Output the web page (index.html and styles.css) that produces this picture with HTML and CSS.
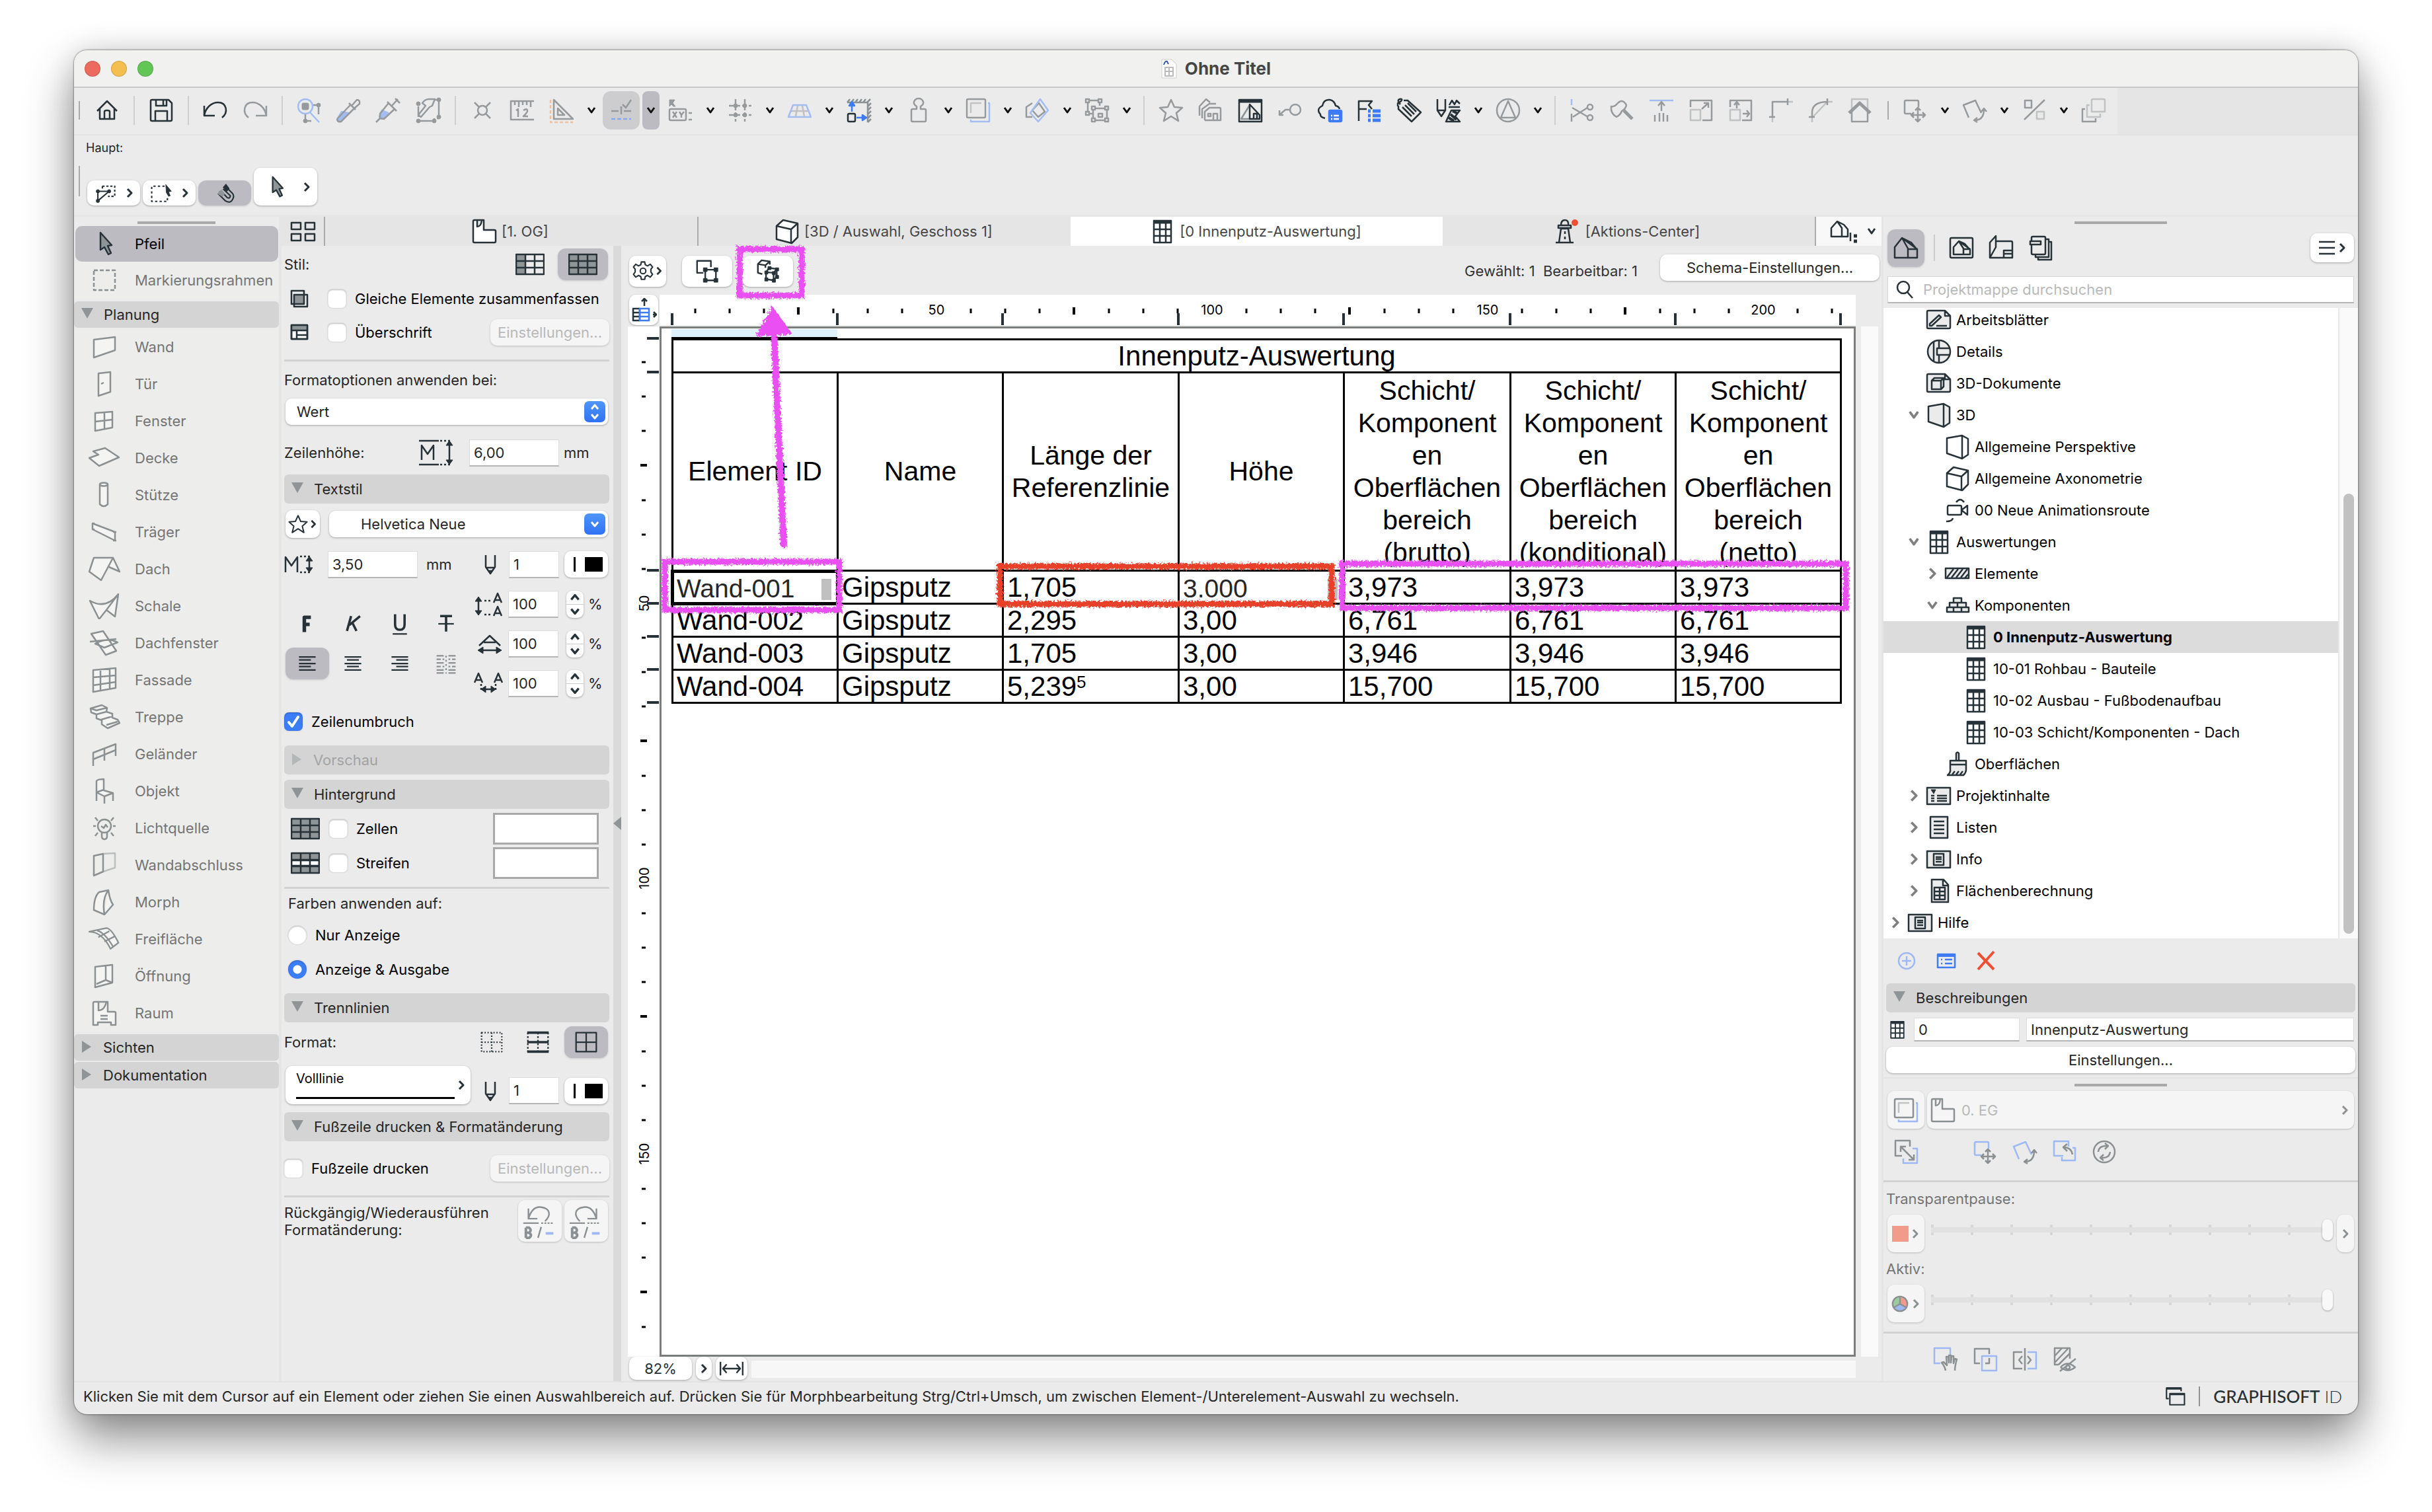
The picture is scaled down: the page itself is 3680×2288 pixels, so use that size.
FILE: index.html
```html
<!DOCTYPE html>
<html lang="de">
<head>
<meta charset="utf-8">
<title>Ohne Titel</title>
<link rel="stylesheet" href="styles.css">
</head>
<body>
<svg class="defs" aria-hidden="true">
  <symbol id="chev-d" viewBox="0 0 16 16"><path d="M3 4l5 7 5-7" stroke-width="3"/></symbol>
  <symbol id="chev-r" viewBox="0 0 16 16"><path d="M5 2l6 6-6 6" stroke-width="3"/></symbol>
  <symbol id="home" viewBox="0 0 40 40"><path d="M5 21L20 6l15 15M9 18v15h22V18M16 33V22q0-2 4-2t4 2v11"/></symbol>
  <symbol id="save" viewBox="0 0 40 40"><path d="M4 6q0-2 2-2h25l5 5v25q0 2-2 2H6q-2 0-2-2zM12 4v9h16V4M23 4v9M11 36V21h18v15"/></symbol>
  <symbol id="undo" viewBox="0 0 40 40"><path d="M3 13v15h16M3 28C5 16 14 8 24 8c13 0 16 15 6 23"/></symbol>
  <symbol id="redo" viewBox="0 0 40 40"><path d="M37 13v15H21M37 28C35 16 26 8 16 8 3 8 0 23 10 31"/></symbol>
  <symbol id="find" viewBox="0 0 40 40"><g class="ac"><circle cx="14" cy="14" r="11"/><path d="M21 23l14 15"/></g><rect class="fi" x="9" y="9" width="10" height="10" rx="2"/><path d="M26 12h8v14M14 26v10h9"/><g class="fi"><circle cx="34" cy="12" r="3"/><circle cx="14" cy="36" r="3"/></g></symbol>
  <symbol id="pipette" viewBox="0 0 40 40"><path class="acf" d="M9 22l10 2L6 37l-4-3z"/><path d="M22 12L3 32q-2 6 5 5l20-20M20 9l10 10M25 12l7-8q5 0 4 6l-8 7"/></symbol>
  <symbol id="syringe" viewBox="0 0 40 40"><path class="acf" d="M10 20l9 4-9 9-4-3z"/><path d="M20 9L7 25v7l6 1L29 18M18 7l14 14M25 13L34 3M30 2l7 7M7 32l-6 6"/></symbol>
  <symbol id="hammer" viewBox="0 0 40 40"><path d="M11 9q4-6 10-6h9l-4 10-4 2L9 30l-4-3 11-14zM28 4h8v28h-3M5 14v16M5 36h24v-4"/><g class="fi"><circle cx="36" cy="4" r="3"/><circle cx="36" cy="30" r="3"/><circle cx="5" cy="10" r="3"/><circle cx="5" cy="36" r="3"/><circle cx="29" cy="36" r="3"/></g></symbol>
  <symbol id="node" viewBox="0 0 40 40"><circle cx="20" cy="20" r="7"/><path d="M8 8l7 7M32 8l-7 7M8 32l7-7M32 32l-7-7"/></symbol>
  <symbol id="rule" viewBox="0 0 40 40"><path d="M38 6H3v28h35M9 6v6M15 6v9M21 6v6M27 6v6M33 6v9M11 20l3-2v12M22 20q6-4 6 1 0 2-6 8h7"/></symbol>
  <symbol id="tri" viewBox="0 0 40 40"><path d="M8 4v29h29zM14 17v10h10z"/><path class="or" d="M3 4v34h34" stroke-dasharray="5 3"/></symbol>
  <symbol id="snap" viewBox="0 0 40 40"><path d="M5 21h11M20 14v12M24 21h11M22 11l5 5 8-12"/><path class="ac" d="M5 33h30" stroke-dasharray="6 3"/></symbol>
  <symbol id="xy" viewBox="0 0 40 40"><rect x="3" y="18" width="25" height="17" rx="2"/><path d="M8 22l6 9M14 22l-6 9M18 22l3 5 4-5M21 27v4M32 24h5M32 34h5"/><path class="fi" d="M3 4h8l-3 5 4 5H9l-3-3-3 3z"/></symbol>
  <symbol id="grid4" viewBox="0 0 40 40"><path d="M13 3v34M27 3v34M3 13h34M3 27h34" stroke-dasharray="7 3"/><g class="fi"><circle cx="13" cy="13" r="3"/><circle cx="27" cy="13" r="3"/><circle cx="13" cy="27" r="3"/><circle cx="27" cy="27" r="3"/></g></symbol>
  <symbol id="persp" viewBox="0 0 40 40"><path class="lt" d="M17 13l-3 16M24 13l3 16M7 21h27"/><path class="ac" d="M10 12h20l7 18H3z"/></symbol>
  <symbol id="move" viewBox="0 0 40 40"><path d="M2 8L6 3M8 8l4-5M14 8l4-5M20 8l4-5M26 8l4-5M32 8l5-5M33 14l5-5M33 20l5-5M33 26l5-5M33 32l5-5M33 38l5-5M2 8h31v30" class="mut"/><rect x="3" y="25" width="11" height="12" rx="2"/><g class="ac"><path d="M9 22V12M16 31h10"/><path class="acf" d="M5 13l4-6 4 6zM25 27l6 4-6 4z"/></g></symbol>
  <symbol id="stamp" viewBox="0 0 40 40"><path d="M9 20q0-2 2-2h6v-4q-5-3-4-7 2-5 7-5t7 5q1 4-4 7v4h6q2 0 2 2v15q0 2-2 2H11q-2 0-2-2z"/></symbol>
  <symbol id="layers" viewBox="0 0 40 40"><rect x="3" y="3" width="28" height="28" rx="2"/><path class="lt" d="M9 24V9h16"/><path class="ac" d="M35 9h2v28H9v-3"/></symbol>
  <symbol id="cut3" viewBox="0 0 40 40"><path d="M12 30H3V15l9-6M12 20l10-11 9 13-10 8z"/><path class="ac" d="M24 3l12 17-15 17L9 24z"/></symbol>
  <symbol id="group" viewBox="0 0 40 40"><path d="M6 9v12M9 5h13M24 8v5M9 25h5M17 17h16M35 20v12M32 35H17M14 32V20M22 25h6v5h-6z"/><path d="M3 3h5v5H3zM22 3h5v5h-5zM3 22h5v5H3zM12 14h5v5h-5zM32 14h5v5h-5zM12 32h5v5h-5zM32 32h5v5h-5z"/></symbol>
  <symbol id="star" viewBox="0 0 40 40"><path d="M20 4l5 11 12 1-9 8 3 12-11-7-11 7 3-12-9-8 12-1z"/></symbol>
  <symbol id="houses" viewBox="0 0 40 40"><path d="M3 28V14L13 3l6 5M7 32V18L18 10h10M11 35V22l7-6h15q2 0 2 2v17H11M24 35V25h6v10M16 25h4v4h-4z"/></symbol>
  <symbol id="house-b" viewBox="0 0 40 40"><rect x="3" y="4" width="34" height="33"/><path d="M3 6h34" stroke-width="5"/><path class="mut" d="M19 33H6L19 12"/><path d="M19 11v22h15v-6zM25 33v-8h5v8"/></symbol>
  <symbol id="key" viewBox="0 0 40 40"><circle cx="28" cy="19" r="8"/><path d="M20 19h-7L5 26M4 20v7h6"/></symbol>
  <symbol id="cloud" viewBox="0 0 40 40"><path d="M13 32Q5 30 6 26-1 18 9 13q2-10 11-9 7 1 9 9 5 1 6 5"/><rect class="acf" x="19" y="20" width="19" height="17" rx="2"/><path class="wh" d="M22 28h2M26 28h8M22 33h2M26 33h8"/></symbol>
  <symbol id="flagl" viewBox="0 0 40 40"><path d="M4 36V6h20l-5 6 5 6M4 18h12"/><path class="ac" d="M18 21h4M25 21h12M18 28h4M25 28h12M18 35h4M25 35h12" stroke-width="5"/></symbol>
  <symbol id="tag" viewBox="0 0 40 40"><path d="M3 14V9l4-2q5-5-1-4-5 2 1 8M12 5h6l20 18-14 14L4 18v-5M10 15l14 14M14 12l14 14M18 9l13 13"/></symbol>
  <symbol id="hatchpen" viewBox="0 0 40 40"><path d="M3 3v17l6 9 6-9V3M3 20h12M21 12l4-7 4 6 3-6 5 5M20 15h17"/><path d="M16 37l8-17h13l-7 9 7 8z"/><path d="M26 21l8 4M23 26l9 8M20 31l8 5" stroke-width="4"/></symbol>
  <symbol id="tric" viewBox="0 0 40 40"><circle cx="20" cy="20" r="17"/><path d="M9 31L20 6l11 25z"/></symbol>
  <symbol id="scissors" viewBox="0 0 40 40"><path class="ac" d="M4 3v9"/><path d="M4 25v12M5 16l24 14M6 30l22-14"/><circle cx="32" cy="15" r="4"/><circle cx="32" cy="31" r="4"/></symbol>
  <symbol id="axe" viewBox="0 0 40 40"><path d="M4 14q5 1 9-4 8-9 14 2-1 6-7 9-2 6-8 9Q3 25 4 14z"/><path d="M23 20l13 13" stroke-width="5"/></symbol>
  <symbol id="arrup" viewBox="0 0 40 40"><path class="ac" d="M2 5h36"/><path d="M20 21V8M15 13l5-6 5 6M10 27v10M17 24v13M23 24v13M29 27v10"/></symbol>
  <symbol id="resize" viewBox="0 0 40 40"><path class="lt" d="M4 19h15v16H4z"/><path d="M4 15V5h32v30H22M21 18L31 9M24 9h7v7"/></symbol>
  <symbol id="stretch" viewBox="0 0 40 40"><path class="lt" d="M4 19h15v16H4z"/><path d="M4 15V5h32v30H22M14 17V8M10 12l4-5 4 5M23 25h10M29 20l4 5-4 5"/></symbol>
  <symbol id="corner" viewBox="0 0 40 40"><path d="M8 30V7h24M3 30h9M31 2v10"/><path class="lt" d="M32 7h7M8 30v8"/></symbol>
  <symbol id="curve" viewBox="0 0 40 40"><path d="M8 30V22Q9 7 32 7M3 30h9M31 2v10"/><path class="lt" d="M32 7h7M8 30v8M10 29L30 8"/></symbol>
  <symbol id="roof" viewBox="0 0 40 40"><path class="lt" d="M8 18V3h24v15"/><path d="M8 20v17h24V20"/><path d="M4 24L20 9l16 15" stroke-width="5"/></symbol>
  <symbol id="mv" viewBox="0 0 40 40"><path class="ac" d="M14 25H6q-2 0-2-2V7q0-2 2-2h17q2 0 2 2v8"/><path d="M24 16v21M14 27h21M20 20l4-4 4 4M20 33l4 4 4-4M18 23l-4 4 4 4M31 23l4 4-4 4"/></symbol>
  <symbol id="rot" viewBox="0 0 40 40"><path class="ac" d="M11 31L3 12 21 5l9 19"/><path d="M20 35q14 0 14-17M30 22l4-5 4 5M24 31l-5 4 5 3"/></symbol>
  <symbol id="pct" viewBox="0 0 40 40"><path d="M5 34L36 4M6 5h10v11H6z"/><path class="lt" d="M24 22h11v11H24z"/></symbol>
  <symbol id="copies" viewBox="0 0 40 40"><path d="M7 18H3v19h20v-5"/><path class="lt" d="M14 12h-4v18h20v-5M17 5q0-2 2-2h16q2 0 2 2v17H17z"/></symbol>
  <symbol id="arrow" viewBox="0 0 40 40"><path class="grf" d="M14 3v26l6-4 6 11 4-2-5-11 6-1z"/></symbol>
  <symbol id="marquee" viewBox="0 0 40 40"><path d="M4 5h32v30H4z" stroke-dasharray="6 3"/></symbol>
  <symbol id="m1" viewBox="0 0 40 40"><path d="M14 8h22v18H24M14 8v5" stroke-dasharray="4 3"/><path d="M6 34V17h20L6 34M26 20v-6" /><g class="fi"><circle cx="6" cy="17" r="3"/><circle cx="26" cy="17" r="3"/><circle cx="6" cy="34" r="3"/></g></symbol>
  <symbol id="m2" viewBox="0 0 40 40"><path d="M26 8H3v27h28v-8" stroke-dasharray="4 4"/><path class="fi" d="M28 5l10 12-5 1 3 7-3 1-4-7z"/></symbol>
  <symbol id="magnet" viewBox="0 0 40 40"><path d="M7 21l13 13q10 6 14-5 2-5-2-9L21 9M13 17l10 11q5 3 6-3L16 13"/><path class="fi" d="M16 10l5-6 6 8-5 6z"/><path class="mutf" d="M8 17l6-3 5 8-4 5-8-5z"/></symbol>
  <symbol id="wand" viewBox="0 0 40 40"><path class="pf" d="M4 9l32-4v20L4 36z"/></symbol>
  <symbol id="tuer" viewBox="0 0 40 40"><path class="pf" d="M11 4l18-2v30l-18 6zM15 20l4-2"/></symbol>
  <symbol id="fenster" viewBox="0 0 40 40"><path class="pf" d="M6 8l26-2v24L6 35zM20 7v25M6 21l26-3"/></symbol>
  <symbol id="decke" viewBox="0 0 48 40"><path class="pf" d="M1 20l14-5-8-5 18-5 21 14-30 13z"/></symbol>
  <symbol id="stuetze" viewBox="0 0 40 40"><path class="pf" d="M13 4v30q6 6 12 0V4"/><ellipse class="pf" cx="19" cy="4" rx="6" ry="2.500"/></symbol>
  <symbol id="traeger" viewBox="0 0 40 40"><path class="pf" d="M2 7v9l34 17V20zM2 7h3M2 16h3M33 20h5M33 33h5"/></symbol>
  <symbol id="dach" viewBox="0 0 48 40"><path class="pf" d="M8 3h29l-18 34L1 24zM37 3l10 21-16-7"/></symbol>
  <symbol id="schale" viewBox="0 0 48 40"><path class="pf" d="M2 12q24 14 43-10l-5 34-13-10-11 14z M45 2L27 26"/></symbol>
  <symbol id="dachfenster" viewBox="0 0 48 40"><path class="pf" d="M4 6l18-4 20 30-16 6zM2 18l40-4M10 21q18-10 34-2l-20 8zM4 6l14 20"/></symbol>
  <symbol id="fassade" viewBox="0 0 40 40"><path class="pf" d="M3 5l34-3v30L3 38zM14 4v32M28 3v30M3 16l34-3M3 28l34-5"/></symbol>
  <symbol id="treppe" viewBox="0 0 48 40"><path class="pf" d="M3 7l17-5 8 4-1 6 9 3v6l8 3 3 5-18 8-9-6v-6l-8-3v-6l-8-3zM3 7l9 3 16-4M12 16l15-4M19 24l17-5M27 32l17-5"/></symbol>
  <symbol id="gelaender" viewBox="0 0 40 40"><path d="M3 38V18L37 5v18M3 28l34-14M20 12v18"/></symbol>
  <symbol id="objekt" viewBox="0 0 40 40"><path class="pf" d="M8 35V5q1-3 11-3v17l14 4-13 5-12-6M20 28v11M33 23v12M8 22l11-4"/></symbol>
  <symbol id="licht" viewBox="0 0 40 40"><circle cx="20" cy="17" r="10"/><path d="M16 26v6q0 5 4 5t4-5v-6M15 17l4 3 3-5 3 4M3 17h4M33 17h4M6 4l4 5M34 4l-4 5M6 32l4-5M34 32l-4-5"/></symbol>
  <symbol id="wandab" viewBox="0 0 40 40"><path d="M4 6l14-3v27L4 36z"/><path class="lt" d="M18 3l18-1v22l-18 6"/></symbol>
  <symbol id="morph" viewBox="0 0 40 40"><path class="pf" d="M4 32q0-20 8-27l14-3q2 15 7 22L20 39zM26 2Q16 15 20 39"/></symbol>
  <symbol id="frei" viewBox="0 0 52 40"><path class="pf" d="M1 8l28-6q8 0 20 24l-13 10Q22 8 1 8zM14 6q12 3 26 26M16 17l18-10M26 24l18-9"/></symbol>
  <symbol id="oeffnung" viewBox="0 0 40 40"><path class="pf" d="M6 6l26-3v27L6 37zM22 5v21L8 32M22 26l10 4"/></symbol>
  <symbol id="raum" viewBox="0 0 40 40"><path class="pf" d="M3 5q0-2 2-2h20v15h10q2 0 2 2v18h-7v-4H10v4H3zM11 3v13q9 0 12-13M14 24h11M14 29h11"/></symbol>
  <symbol id="zone" viewBox="0 0 40 40"><path class="whf" d="M3 5q0-2 2-2h14v15h16q2 0 2 2v15q0 2-2 2H5q-2 0-2-2zM9 3v10q6 0 7-10"/></symbol>
  <symbol id="box3" viewBox="0 0 40 40"><path class="whf" d="M4 12l10-9 22 5v21l-9 9-23-6zM4 12l22 5v21M26 17l10-9"/></symbol>
  <symbol id="box3p" viewBox="0 0 40 40"><path class="pg" d="M4 7l23-4 9 5v24l-9 6-23-8zM27 3v35"/></symbol>
  <symbol id="tbl" viewBox="0 0 40 40"><path class="whf" d="M7 4h26v33H7z"/><path d="M7 6h26" stroke-width="5"/><path d="M7 17h26M7 27h26M16 8v29M25 8v29"/></symbol>
  <symbol id="light" viewBox="0 0 40 40"><path d="M1 37h27M6 37l3-21h11l3 21M5 15v-4h19v4zM9 11q0-8 6-8t5 8M15 20v4M15 28v4"/><circle cx="30" cy="7" r="5" class="red"/></symbol>
  <symbol id="hs" viewBox="0 0 40 40"><path d="M3 35V19L14 5l14 7 9 11v12zM14 5l9 16v14M14 5l23 17H23"/></symbol>
  <symbol id="hs-s" viewBox="0 0 48 40"><path d="M5 28V15L14 5l10 5 6 7v11zM14 5l7 10v13M34 22v13"/><path d="M39 27h5M39 35h5" stroke-width="5"/></symbol>
  <symbol id="hs-f" viewBox="0 0 40 40"><rect x="3" y="5" width="34" height="30" rx="2"/><path d="M8 30V19l8-9 9 4 8 9v7zM16 10l7 11v9M16 10l17 12H23"/></symbol>
  <symbol id="layout" viewBox="0 0 40 40"><path d="M12 10h23q2 0 2 2v23H3V12L12 2v17L3 35M24 35V24h13M24 29h13"/></symbol>
  <symbol id="pub" viewBox="0 0 40 40"><path d="M6 10V5q0-2 2-2h17q2 0 2 2v23q0 2-2 2H8q-2 0-2-2V15M4 10h16v5H4zM28 7h4v27H12v-3M33 11h3v27H16v-3"/></symbol>
  <symbol id="gear" viewBox="0 0 40 40"><circle cx="20" cy="20" r="5"/><path d="M17 4h6l1 5 4 2 5-3 4 5-3 4v5l3 4-4 5-5-3-4 2-1 5h-6l-1-5-4-2-5 3-4-5 3-4v-5l-3-4 4-5 5 3 4-2z"/></symbol>
  <symbol id="sel2" viewBox="0 0 40 40"><path d="M14 23H4V4h22v10M17 18h17v17H17z"/><path class="fi" d="M14 15h6v6h-6zM31 15h6v6h-6zM14 32h6v6h-6zM31 32h6v6h-6z"/></symbol>
  <symbol id="sel3" viewBox="0 0 40 40"><path d="M11 25l-7-2V9l6-6 13 2v5M4 9l12 2 7-6M16 11v4M17 22l12 1v12l-12-2zM22 15l12 2v12l-5 6M29 23l5-6M17 22l5-7"/><path class="fi" d="M15 20h5v5h-5zM27 21h5v5h-5zM15 31h5v5h-5zM27 33h5v5h-5zM20 13h5v5h-5zM32 15h5v5h-5zM32 27h5v5h-5z"/></symbol>
  <symbol id="corner-t" viewBox="0 0 40 40"><path d="M21 14V3M17 7l4-4 4 4M34 27h5M35 23l4 4-4 4M14 18H4v18h10zM4 24h10M4 30h10"/><path class="ac" d="M14 18h14v18H14zM14 24h14M14 30h14"/></symbol>
  <symbol id="st1" viewBox="0 0 44 40"><path class="mutf" d="M1 5h14v30H1z"/><path d="M1 5h42v30H1zM1 15h42M1 25h42M15 5v30M29 5v30"/></symbol>
  <symbol id="st2" viewBox="0 0 44 40"><path class="mutf" d="M1 5h42v30H1z"/><path d="M1 5h42v30H1zM1 15h42M1 25h42M15 5v30M29 5v30"/></symbol>
  <symbol id="st3" viewBox="0 0 44 40"><path class="mutf" d="M1 5h42v30H1z"/><path class="whf" d="M1 16h42v8H1z"/><path d="M1 5h42v30H1zM1 15h42M1 25h42M15 5v30M29 5v30"/></symbol>
  <symbol id="merge" viewBox="0 0 28 28"><path class="mutf" d="M6 8h15v14H6z"/><path d="M2 2h19v20H2zM6 8h20v18H6z"/></symbol>
  <symbol id="headr" viewBox="0 0 28 28"><path class="whf" d="M2 3h24v21H2z"/><path class="mutf" d="M2 3h24v8H2z"/><path d="M2 3h24v21H2zM2 11h24M10 11v13M10 18h16"/></symbol>
  <symbol id="rowh" viewBox="0 0 52 40"><path d="M0 2h30M0 38h30M4 31V9l9 13 9-13v22M46 7v26"/><path d="M32 2h18M32 38h18" stroke-dasharray="3 3"/><path class="fi" d="M41 9l5-7 5 7zM41 31l5 7 5-7z"/></symbol>
  <symbol id="mh" viewBox="0 0 44 40"><path d="M2 32V9l9 13 9-13v23M38 13v14"/><path d="M24 8h18M24 32h18" stroke-dasharray="3 3"/><path class="fi" d="M33 15l5-7 5 7zM33 25l5 7 5-7z"/></symbol>
  <symbol id="pen" viewBox="0 0 20 40"><path d="M3 6v18l7 10 7-10V6M3 25h14M8 30h4"/></symbol>
  <symbol id="aa-v" viewBox="0 0 44 40"><path d="M7 13v18M30 18l6-14 6 14M32 14h8M30 38l6-14 6 14M32 34h8"/><path d="M16 15h12M16 36h12" stroke-dasharray="3 3"/><path class="fi" d="M2 16l5-7 5 7zM2 30l5 7 5-7z"/></symbol>
  <symbol id="aa-w" viewBox="0 0 44 40"><path d="M8 23L24 8l16 15M15 18h18M12 30h24"/><path class="fi" d="M14 25v10l-8-5zM34 25v10l8-5z"/></symbol>
  <symbol id="aa-h" viewBox="0 0 44 40"><path d="M1 19L7 5l6 14M3 15h8M31 19l6-14 6 14M33 15h8M16 29h12"/><path d="M11 21v12M33 21v12" stroke-dasharray="3 3"/><path class="fi" d="M18 24v10l-7-5zM26 24v10l7-5z"/></symbol>
  <symbol id="bf" viewBox="0 0 40 40"><path d="M15 34V9h11M15 21h9" stroke-width="6"/></symbol>
  <symbol id="bk" viewBox="0 0 40 40"><path d="M17 7l-7 25M32 7L14 22M19 18l7 14" stroke-width="4"/></symbol>
  <symbol id="bu" viewBox="0 0 40 40"><path d="M12 4v17q0 9 8 9t8-9V4" stroke-width="4"/><path d="M8 37h24"/></symbol>
  <symbol id="bt" viewBox="0 0 40 40"><path d="M10 7h20M20 7v26" stroke-width="4"/><path d="M7 20h26"/></symbol>
  <symbol id="al" viewBox="0 0 40 40"><path d="M6 9h28M6 14h20M6 20h28M6 25h20M6 31h28"/></symbol>
  <symbol id="acx" viewBox="0 0 40 40"><path d="M6 9h28M10 14h20M6 20h28M10 25h20M6 31h28"/></symbol>
  <symbol id="ar" viewBox="0 0 40 40"><path d="M6 9h28M14 14h20M6 20h28M14 25h20M6 31h28"/></symbol>
  <symbol id="aj" viewBox="0 0 40 40"><path d="M4 7h12M4 13h7M14 13h3M4 19h12M4 25h7M14 25h3M4 31h12M4 36h12M24 7h12M24 13h3M30 13h6M24 19h12M24 25h3M30 25h6M24 31h12M24 36h12"/><path d="M20 7v30" stroke-dasharray="3 4"/></symbol>
  <symbol id="f1" viewBox="0 0 40 40"><path d="M3 4h34v32H3zM20 4v32M3 20h34" stroke-dasharray="2 3"/></symbol>
  <symbol id="f2" viewBox="0 0 40 40"><path d="M3 4v32M20 4v32M37 4v32" stroke-dasharray="3 3"/><path d="M2 4h36M2 20h36M2 36h36" stroke-width="4"/></symbol>
  <symbol id="f3" viewBox="0 0 40 40"><path d="M3 4h34v32H3zM20 4v32M3 20h34"/></symbol>
  <symbol id="bi-u" viewBox="0 0 60 60"><path d="M12 10v16h14M12 26Q18 6 32 8c14 2 16 12 6 22M4 33h24M32 39l-5 17"/><path d="M8 40v16M8 40h5q5 4 0 8H8M13 48q6 4 0 8H8" stroke-width="4"/><path d="M32 33h20" stroke-dasharray="3 2"/><path d="M39 49h12" class="ac" stroke-width="4"/></symbol>
  <symbol id="bi-r" viewBox="0 0 60 60"><path d="M46 10v16H32M46 26Q40 6 26 8C12 10 10 20 20 30M4 33h24M32 39l-5 17"/><path d="M8 40v16M8 40h5q5 4 0 8H8M13 48q6 4 0 8H8" stroke-width="4"/><path d="M32 33h20" stroke-dasharray="3 2"/><path d="M39 49h12" class="ac" stroke-width="4"/></symbol>
  <symbol id="four" viewBox="0 0 40 40"><path d="M2 7h14v10H2zM23 7h14v10H23zM2 24h14v10H2zM23 24h14v10H23z"/></symbol>
  <symbol id="sheet" viewBox="0 0 40 40"><path class="pg" d="M2 8q0-2 2-2h25l8 8v17q0 2-2 2H4q-2 0-2-2zM29 6v8h8M6 26l14-13 3 3L9 29H6zM16 29h16"/></symbol>
  <symbol id="detail" viewBox="0 0 40 40"><circle class="pg" cx="20" cy="20" r="17"/><path d="M12 5v30M20 3v12M20 25v12M37 15H17v10h20"/></symbol>
  <symbol id="doc3" viewBox="0 0 40 40"><path class="pg" d="M2 8q0-2 2-2h25l8 8v17q0 2-2 2H4q-2 0-2-2zM29 6v8h8M9 16l4-4h14v13l-4 4H9zM9 16h14v13M23 16l4-4"/></symbol>
  <symbol id="cam" viewBox="0 0 40 40"><path d="M6 13h18q2 0 2 2v10q0 2-2 2H7q-2 0-2-2V15zM26 20l9-7v14zM18 8q6-8 12 0M3 37q9 0 10-5"/></symbol>
  <symbol id="hatch" viewBox="0 0 40 40"><path class="pg" d="M2 12h35v15H2z"/><path d="M4 26l10-13M11 26l10-13M18 26l10-13M25 26l10-13M31 27l5-6"/></symbol>
  <symbol id="bricks" viewBox="0 0 40 40"><path class="pg" d="M4 23h33v7H4zM8 16h25v7H8zM14 9h12v7H14zM14 23v7M26 23v7M20 16v7"/></symbol>
  <symbol id="brush" viewBox="0 0 40 40"><path class="pg" d="M18 15V4q2-3 4 0v11M9 15h24v14q0 4-4 8H5q5-4 4-9zM9 21h24M12 36l4-5M18 36l4-5M24 36l4-5"/></symbol>
  <symbol id="proj" viewBox="0 0 40 40"><path class="pg" d="M2 8h35v25H2z"/><path class="fi" d="M8 11h7l-3 6z"/><path d="M8 20h5M17 20h15M8 24h5M17 24h15M8 28h5M17 28h15"/></symbol>
  <symbol id="list" viewBox="0 0 40 40"><path class="pg" d="M7 4h26v32H7zM12 11h16M12 17h16M12 23h16M12 29h16"/></symbol>
  <symbol id="info" viewBox="0 0 40 40"><path class="pg" d="M2 8h35v25H2zM12 12h15v17H12zM15 17h9M15 20h9M15 24h9"/></symbol>
  <symbol id="calc" viewBox="0 0 40 40"><path class="pg" d="M9 3h18l7 8v26H9zM26 3v9h8M13 15h16v18H13zM13 21h16M13 27h16M21 15v18"/></symbol>
  <symbol id="plus" viewBox="0 0 40 40"><circle cx="20" cy="20" r="12"/><path d="M20 13v14M13 20h14"/></symbol>
  <symbol id="lst" viewBox="0 0 40 40"><path d="M7 10h26v20H7zM12 18h2M18 18h11M12 24h2M18 24h11"/><path d="M7 12h26" stroke-width="4"/></symbol>
  <symbol id="del" viewBox="0 0 40 40"><path d="M8 8l24 25M32 6L8 33" stroke-width="4"/></symbol>
  <symbol id="mag" viewBox="0 0 40 40"><circle cx="18" cy="17" r="9"/><path d="M24 24l8 9"/></symbol>
  <symbol id="burger" viewBox="0 0 30 40"><path d="M3 11h24M3 20h24M3 29h24"/></symbol>
  <symbol id="swap" viewBox="0 0 40 40"><path d="M14 26H4V3h22v9M12 12l20 20M12 20v-8h8M32 24v8h-8"/><path class="ac" d="M30 15h7v22H16v-7"/></symbol>
  <symbol id="back" viewBox="0 0 40 40"><path class="ac" d="M18 26H4V4h22v8M32 14h4v19H16v-5"/><path d="M32 24q-2-11-14-11M24 8l-6 5 6 6"/></symbol>
  <symbol id="refresh" viewBox="0 0 40 40"><circle cx="20" cy="20" r="16"/><path d="M11 20q1-10 14-9M21 7l5 4-5 5M29 20q-1 10-14 9M19 33l-5-4 5-5"/></symbol>
  <symbol id="hand" viewBox="0 0 40 40"><path class="ac" d="M12 26H3V3h24v10"/><path d="M20 37q-1-6-6-12l3-1 5 5-1-13h3l1 9V14h3v11l1-10h3v11l2-7 3 1q-3 10-3 17"/></symbol>
  <symbol id="over" viewBox="0 0 40 40"><path d="M12 26H4V4h22v8M20 26h6v-8"/><path class="ac" d="M15 15h22v22H15z"/></symbol>
  <symbol id="split" viewBox="0 0 40 40"><path d="M16 9H3v25h13M20 3v34M16 15l-5 6 5 6M24 15l5 6-5 6"/><path class="ac" d="M24 9h13v25H24"/></symbol>
  <symbol id="hide" viewBox="0 0 40 40"><path d="M11 28H5V3h23v16M5 15L16 3M5 25L25 4M11 28l17-17M14 32q10-11 22 0-11 9-22 0M13 38l24-19"/><circle cx="25" cy="32" r="3"/></symbol>
  <symbol id="wins" viewBox="0 0 40 40"><path d="M9 24H5V5h26v6M11 15h26v20H11z"/><path d="M5 6h26M11 16h26" stroke-width="4"/></symbol>
  <symbol id="rgb" viewBox="0 0 30 30"><path fill="#9bcb9e" stroke="none" d="M15 15V3A12 12 0 0 0 5 21z"/><path fill="#f19b8b" stroke="none" d="M15 15V3A12 12 0 0 1 25 21z"/><path fill="#9db8f3" stroke="none" d="M15 15L5 21a12 12 0 0 0 20 0z"/><circle cx="15" cy="15" r="12"/><path d="M15 3v12L5 21M15 15l10 6"/></symbol>
  <symbol id="fit" viewBox="0 0 40 30"><path d="M2 4v22M38 4v22M6 15h28M12 8l-6 7 6 7M28 8l6 7-6 7"/></symbol>
</svg>

<div class="window">
  <header class="titlebar">
    <div class="lights"><span class="l-red"></span><span class="l-yel"></span><span class="l-grn"></span></div>
    <h1><svg class="docicon" viewBox="0 0 24 30"><path d="M1 1h15l7 7v21H1z" fill="#fff" stroke="#ccc"/><path d="M4 9q2-6 5-5l2 4" fill="none" stroke="#3558b8" stroke-width="2"/><path d="M6 13h12v13H6zM6 19h12M12 13v13" fill="none" stroke="#bbb" stroke-width="2"/></svg>Ohne Titel</h1>
  </header>

  <nav class="toolbar" aria-label="Standard">
    <div class="tools-row">
      <i class="bar"></i>
      <button class="tb dk"><svg><use href="#home"/></svg></button><i class="sep"></i>
      <button class="tb dk"><svg><use href="#save"/></svg></button><i class="sep"></i>
      <button class="tb dk"><svg><use href="#undo"/></svg></button>
      <button class="tb"><svg><use href="#redo"/></svg></button><i class="sep"></i>
      <button class="tb"><svg><use href="#find"/></svg></button>
      <button class="tb"><svg><use href="#pipette"/></svg></button>
      <button class="tb"><svg><use href="#syringe"/></svg></button>
      <button class="tb"><svg><use href="#hammer"/></svg></button><i class="sep"></i>
      <button class="tb"><svg><use href="#node"/></svg></button>
      <button class="tb"><svg><use href="#rule"/></svg></button>
      <button class="tb"><svg><use href="#tri"/></svg></button>
      <button class="ch"><svg><use href="#chev-d"/></svg></button>
      <button class="tb on"><svg><use href="#snap"/></svg></button>
      <button class="ch on"><svg><use href="#chev-d"/></svg></button>
      <button class="tb"><svg><use href="#xy"/></svg></button><button class="ch"><svg><use href="#chev-d"/></svg></button>
      <button class="tb"><svg><use href="#grid4"/></svg></button><button class="ch"><svg><use href="#chev-d"/></svg></button>
      <button class="tb"><svg><use href="#persp"/></svg></button><button class="ch"><svg><use href="#chev-d"/></svg></button>
      <button class="tb dk"><svg><use href="#move"/></svg></button><button class="ch"><svg><use href="#chev-d"/></svg></button>
      <button class="tb"><svg><use href="#stamp"/></svg></button><button class="ch"><svg><use href="#chev-d"/></svg></button>
      <button class="tb"><svg><use href="#layers"/></svg></button><button class="ch"><svg><use href="#chev-d"/></svg></button>
      <button class="tb"><svg><use href="#cut3"/></svg></button><button class="ch"><svg><use href="#chev-d"/></svg></button>
      <button class="tb"><svg><use href="#group"/></svg></button><button class="ch"><svg><use href="#chev-d"/></svg></button><i class="sep"></i>
      <button class="tb"><svg><use href="#star"/></svg></button>
      <button class="tb"><svg><use href="#houses"/></svg></button>
      <button class="tb dk"><svg><use href="#house-b"/></svg></button>
      <button class="tb"><svg><use href="#key"/></svg></button>
      <button class="tb dk"><svg><use href="#cloud"/></svg></button>
      <button class="tb dk"><svg><use href="#flagl"/></svg></button>
      <button class="tb dk"><svg><use href="#tag"/></svg></button>
      <button class="tb dk"><svg><use href="#hatchpen"/></svg></button><button class="ch"><svg><use href="#chev-d"/></svg></button>
      <button class="tb"><svg><use href="#tric"/></svg></button><button class="ch"><svg><use href="#chev-d"/></svg></button><i class="sep"></i>
      <button class="tb"><svg><use href="#scissors"/></svg></button>
      <button class="tb"><svg><use href="#axe"/></svg></button>
      <button class="tb"><svg><use href="#arrup"/></svg></button>
      <button class="tb"><svg><use href="#resize"/></svg></button>
      <button class="tb"><svg><use href="#stretch"/></svg></button>
      <button class="tb"><svg><use href="#corner"/></svg></button>
      <button class="tb"><svg><use href="#curve"/></svg></button>
      <button class="tb"><svg><use href="#roof"/></svg></button>
      <i class="bar end"></i>
      <button class="tb mono"><svg><use href="#mv"/></svg></button><button class="ch"><svg><use href="#chev-d"/></svg></button>
      <button class="tb mono"><svg><use href="#rot"/></svg></button><button class="ch"><svg><use href="#chev-d"/></svg></button>
      <button class="tb"><svg><use href="#pct"/></svg></button><button class="ch"><svg><use href="#chev-d"/></svg></button>
      <button class="tb"><svg><use href="#copies"/></svg></button>
    </div>
  </nav>

  <section class="infobox">
    <p>Haupt:</p>
    <div class="info-row">
      <i class="bar"></i>
      <button class="btn ib"><svg><use href="#m1"/></svg><svg class="c"><use href="#chev-r"/></svg></button>
      <button class="btn ib"><svg><use href="#m2"/></svg><svg class="c"><use href="#chev-r"/></svg></button>
      <button class="btn ib pressed"><svg><use href="#magnet"/></svg></button>
      <button class="btn ib big"><svg><use href="#arrow"/></svg><svg class="c"><use href="#chev-r"/></svg></button>
    </div>
  </section>

  <main class="body">
    <aside class="toolbox">
      <i class="grip"></i>
      <button class="tool sel"><svg><use href="#arrow"/></svg>Pfeil</button>
      <button class="tool"><svg><use href="#marquee"/></svg>Markierungsrahmen</button>
      <button class="group"><i class="t-d"></i>Planung</button>
      <button class="tool"><svg><use href="#wand"/></svg>Wand</button>
      <button class="tool"><svg><use href="#tuer"/></svg>Tür</button>
      <button class="tool"><svg><use href="#fenster"/></svg>Fenster</button>
      <button class="tool"><svg><use href="#decke"/></svg>Decke</button>
      <button class="tool"><svg><use href="#stuetze"/></svg>Stütze</button>
      <button class="tool"><svg><use href="#traeger"/></svg>Träger</button>
      <button class="tool"><svg><use href="#dach"/></svg>Dach</button>
      <button class="tool"><svg><use href="#schale"/></svg>Schale</button>
      <button class="tool"><svg><use href="#dachfenster"/></svg>Dachfenster</button>
      <button class="tool"><svg><use href="#fassade"/></svg>Fassade</button>
      <button class="tool"><svg><use href="#treppe"/></svg>Treppe</button>
      <button class="tool"><svg><use href="#gelaender"/></svg>Geländer</button>
      <button class="tool"><svg><use href="#objekt"/></svg>Objekt</button>
      <button class="tool"><svg><use href="#licht"/></svg>Lichtquelle</button>
      <button class="tool"><svg><use href="#wandab"/></svg>Wandabschluss</button>
      <button class="tool"><svg><use href="#morph"/></svg>Morph</button>
      <button class="tool"><svg><use href="#frei"/></svg>Freifläche</button>
      <button class="tool"><svg><use href="#oeffnung"/></svg>Öffnung</button>
      <button class="tool"><svg><use href="#raum"/></svg>Raum</button>
      <button class="group"><i class="t-r"></i>Sichten</button>
      <button class="group"><i class="t-r"></i>Dokumentation</button>
    </aside>

    <div class="center">
      <nav class="tabs">
        <button class="t-grid"><svg><use href="#four"/></svg></button>
        <a href="#og" class="tab"><svg><use href="#zone"/></svg>[1. OG]</a>
        <a href="#3d" class="tab"><svg><use href="#box3"/></svg>[3D / Auswahl, Geschoss 1]</a>
        <a href="#putz" class="tab active"><svg><use href="#tbl"/></svg>[0 Innenputz-Auswertung]</a>
        <a href="#aktion" class="tab last"><svg><use href="#light"/></svg>[Aktions-Center]</a>
        <button class="t-more"><svg class="w"><use href="#hs-s"/></svg><svg class="c"><use href="#chev-d"/></svg></button>
      </nav>

      <div class="work">
        <aside class="settings">
          <div class="row stil"><span class="grow">Stil:</span><svg class="w44"><use href="#st1"/></svg><button class="btn pressed pb"><svg class="w44"><use href="#st2"/></svg></button></div>
          <div class="row r48"><svg class="w28"><use href="#merge"/></svg><input type="checkbox" id="c1"><label for="c1">Gleiche Elemente zusammenfassen</label></div>
          <div class="row r54"><svg class="w28"><use href="#headr"/></svg><input type="checkbox" id="c2"><label for="c2" class="grow">Überschrift</label><button class="btn dis setb" disabled>Einstellungen...</button></div>
          <hr class="m14">
          <label class="row r56" for="s1">Formatoptionen anwenden bei:</label>
          <div class="select"><select id="s1"><option>Wert</option></select><span class="cap"><svg viewBox="0 0 16 32"><path d="M3 12l5-6 5 6M3 20l5 6 5-6"/></svg></span></div>
          <div class="row zh"><label for="i1" class="grow">Zeilenhöhe:</label><svg class="w52"><use href="#rowh"/></svg><input type="text" class="w136" id="i1" value="6,00"><span class="unit">mm</span></div>
          <button class="group"><i class="t-d"></i>Textstil</button>
          <div class="row r62"><button class="btn starb"><svg><use href="#star"/></svg><svg class="c"><use href="#chev-r"/></svg></button><div class="select grow font"><select aria-label="Schrift"><option>Helvetica Neue</option></select><span class="cap"><svg viewBox="0 0 16 32"><path d="M3 13l5 6 5-6"/></svg></span></div></div>
          <div class="row r60"><svg class="w44"><use href="#mh"/></svg><input type="text" class="w136 ml22" value="3,50" aria-label="Texthöhe"><span class="unit2 grow">mm</span><svg class="w20"><use href="#pen"/></svg><input type="text" class="w76 ml18" value="1" aria-label="Stift"><button class="btn penb"><i></i><b></b></button></div>
          <div class="format">
            <div class="btns">
              <button><svg><use href="#bf"/></svg></button><button><svg><use href="#bk"/></svg></button><button><svg><use href="#bu"/></svg></button><button><svg><use href="#bt"/></svg></button>
              <button class="pressed"><svg><use href="#al"/></svg></button><button><svg><use href="#acx"/></svg></button><button><svg><use href="#ar"/></svg></button><button class="mu"><svg><use href="#aj"/></svg></button>
            </div>
            <div class="nums">
              <div class="row r60"><svg class="w44"><use href="#aa-v"/></svg><input type="text" class="w76" value="100" aria-label="Zeilenabstand"><span class="step"><button><svg viewBox="0 0 16 16"><path d="M3 11l5-6 5 6"/></svg></button><button><svg viewBox="0 0 16 16"><path d="M3 5l5 6 5-6"/></svg></button></span>%</div>
              <div class="row r60"><svg class="w44"><use href="#aa-w"/></svg><input type="text" class="w76" value="100" aria-label="Breite"><span class="step"><button><svg viewBox="0 0 16 16"><path d="M3 11l5-6 5 6"/></svg></button><button><svg viewBox="0 0 16 16"><path d="M3 5l5 6 5-6"/></svg></button></span>%</div>
              <div class="row r60"><svg class="w44"><use href="#aa-h"/></svg><input type="text" class="w76" value="100" aria-label="Zeichenabstand"><span class="step"><button><svg viewBox="0 0 16 16"><path d="M3 11l5-6 5 6"/></svg></button><button><svg viewBox="0 0 16 16"><path d="M3 5l5 6 5-6"/></svg></button></span>%</div>
            </div>
          </div>
          <div class="row r56 mb8"><input type="checkbox" id="c3" checked><label for="c3">Zeilenumbruch</label></div>
          <button class="group dimmed" disabled><i class="t-r"></i>Vorschau</button>
          <button class="group mt8"><i class="t-d"></i>Hintergrund</button>
          <div class="row bg mt4"><svg class="w44"><use href="#st2"/></svg><input type="checkbox" id="c4"><label for="c4" class="grow">Zellen</label><button class="well" aria-label="Zellenfarbe"></button></div>
          <div class="row bg"><svg class="w44"><use href="#st3"/></svg><input type="checkbox" id="c5"><label for="c5" class="grow">Streifen</label><button class="well" aria-label="Streifenfarbe"></button></div>
          <hr class="m10">
          <div class="row fa">Farben anwenden auf:</div>
          <div class="row ra"><input type="radio" name="f" id="r1"><label for="r1">Nur Anzeige</label></div>
          <div class="row ra"><input type="radio" name="f" id="r2" checked><label for="r2">Anzeige &amp; Ausgabe</label></div>
          <button class="group m10"><i class="t-d"></i>Trennlinien</button>
          <div class="row fmt r60"><span class="grow">Format:</span><svg><use href="#f1"/></svg><svg><use href="#f2"/></svg><button class="btn pressed pb"><svg><use href="#f3"/></svg></button></div>
          <div class="row ln"><button class="btn line"><span>Volllinie</span><svg class="c"><use href="#chev-r"/></svg></button><span class="grow"></span><svg class="w20"><use href="#pen"/></svg><input type="text" class="w76 ml18" value="1" aria-label="Linienstift"><button class="btn penb"><i></i><b></b></button></div>
          <button class="group"><i class="t-d"></i>Fußzeile drucken &amp; Formatänderung</button>
          <div class="row fz"><input type="checkbox" id="c6"><label for="c6" class="grow">Fußzeile drucken</label><button class="btn dis setb" disabled>Einstellungen...</button></div>
          <hr>
          <div class="row ur"><span class="grow">Rückgängig/Wiederausführen<br>Formatänderung:</span><button class="btn dis ubt" disabled><svg><use href="#bi-u"/></svg></button><button class="btn dis ubt" disabled><svg><use href="#bi-r"/></svg></button></div>
        </aside>
        <i class="splitter"></i>

        <section class="editor">
          <div class="etools">
            <button class="btn gearb"><svg><use href="#gear"/></svg><svg class="c"><use href="#chev-r"/></svg></button>
            <button class="btn e76"><svg><use href="#sel2"/></svg></button>
            <button class="btn e76"><svg><use href="#sel3"/></svg></button>
            <span class="state">Gewählt: 1&nbsp; Bearbeitbar: 1</span>
            <button class="btn schema">Schema-Einstellungen...</button>
          </div>
          <div class="sheet">
            <button class="btn cornerb"><svg><use href="#corner-t"/></svg></button>
            <svg class="ruler-h">
              <defs><pattern id="ph" width="417" height="46" patternUnits="userSpaceOnUse" x="2"><path d="M52 21v7M104 21v7M156 21v7M261 21v7M313 21v7M365 21v7" stroke="#000" stroke-width="3"/><path d="M208 19v11" stroke="#000" stroke-width="4"/></pattern></defs>
              <rect width="100%" height="46" fill="url(#ph)" stroke="none"/>
              <path d="M19 28v18M269 28v18M519 28v18M785 28v18M1035 28v18M1287 28v18M1537 28v18M1787 28v18" stroke="#263238" stroke-width="4"/>
              <text x="419" y="30">50</text><text x="836" y="30">100</text><text x="1253" y="30">150</text><text x="1670" y="30">200</text>
            </svg>
            <svg class="ruler-v">
              <defs><pattern id="pv" width="48" height="417" patternUnits="userSpaceOnUse" y="2"><path d="M21 52h6M21 104h6M21 156h6M21 261h6M21 313h6M21 365h6" stroke="#000" stroke-width="3"/><path d="M19 208h10" stroke="#000" stroke-width="4"/></pattern></defs>
              <rect width="48" height="100%" fill="url(#pv)" stroke="none"/>
              <path d="M29 18h18M29 69h18M29 369h18M29 419h18M29 469h18M29 519h18M29 569h18" stroke="#263238" stroke-width="4"/>
              <text transform="translate(32 419) rotate(-90)">50</text><text transform="translate(32 835) rotate(-90)">100</text><text transform="translate(32 1252) rotate(-90)">150</text>
            </svg>
            <div class="canvas">
              <div class="colhead"></div>
              <table>
                <colgroup><col class="w250"><col class="w250"><col class="w266"><col class="w250"><col class="w252"><col class="w250"><col class="w250"></colgroup>
                <thead>
                  <tr><th colspan="7">Innenputz-Auswertung</th></tr>
                  <tr class="hd"><th>Element ID</th><th>Name</th><th>Länge der<br>Referenzlinie</th><th>Höhe</th><th>Schicht/<br>Komponent<br>en<br>Oberflächen<br>bereich<br>(brutto)</th><th>Schicht/<br>Komponent<br>en<br>Oberflächen<br>bereich<br>(konditional)</th><th>Schicht/<br>Komponent<br>en<br>Oberflächen<br>bereich<br>(netto)</th></tr>
                </thead>
                <tbody>
                  <tr><td class="ed"><input type="text" class="cell focus" value="Wand-001" aria-label="Element ID"></td><td>Gipsputz</td><td>1,705</td><td class="ed"><input type="text" class="cell" value="3.000" aria-label="Höhe"></td><td>3,973</td><td>3,973</td><td>3,973</td></tr>
                  <tr><td>Wand-002</td><td>Gipsputz</td><td>2,295</td><td>3,00</td><td>6,761</td><td>6,761</td><td>6,761</td></tr>
                  <tr><td>Wand-003</td><td>Gipsputz</td><td>1,705</td><td>3,00</td><td>3,946</td><td>3,946</td><td>3,946</td></tr>
                  <tr><td>Wand-004</td><td>Gipsputz</td><td>5,239<sup>5</sup></td><td>3,00</td><td>15,700</td><td>15,700</td><td>15,700</td></tr>
                </tbody>
              </table>
            </div>
            <div class="vtrack"></div>
            <div class="zoom"><button class="btn z1">82%</button><button class="btn z2"><svg class="c"><use href="#chev-r"/></svg></button><button class="btn z3"><svg><use href="#fit"/></svg></button><div class="htrack"></div></div>
          </div>
          <svg class="marks" aria-hidden="true">
            <filter id="rough" x="-20%" y="-5%" width="140%" height="110%"><feTurbulence type="fractalNoise" baseFrequency="0.35" numOctaves="2" seed="4"/><feDisplacementMap in="SourceGraphic" scale="9"/></filter>
            <g filter="url(#rough)" fill="none">
              <path class="rd" d="M573 485h502v57H573z"/>
              <path class="pk" d="M179 5h94v70h-94zM66 478h264v73H66zM1091 481h762v67H1091z"/>
              <path class="pk arr" d="M231 130l15 326"/>
              <path class="pkf" d="M229 94l-23 41 50-3z"/>
            </g>
          </svg>
        </section>
      </div>
    </div>

    <aside class="nav">
      <i class="grip"></i>
      <div class="nav-tools">
        <button class="pressed nb"><svg><use href="#hs"/></svg></button><i class="nsep"></i>
        <button><svg><use href="#hs-f"/></svg></button><button><svg><use href="#layout"/></svg></button><button><svg><use href="#pub"/></svg></button>
        <button class="btn menu"><svg class="w30"><use href="#burger"/></svg><svg class="c"><use href="#chev-r"/></svg></button>
      </div>
      <label class="search"><svg><use href="#mag"/></svg><input type="search" placeholder="Projektmappe durchsuchen"></label>
      <div class="tree">
        <ul>
          <li class="l1"><i></i><svg><use href="#sheet"/></svg>Arbeitsblätter</li>
          <li class="l1"><i></i><svg><use href="#detail"/></svg>Details</li>
          <li class="l1"><i></i><svg><use href="#doc3"/></svg>3D-Dokumente</li>
          <li class="l1"><i><svg class="c"><use href="#chev-d"/></svg></i><svg><use href="#box3p"/></svg>3D</li>
          <li class="l2 wt"><i></i><svg><use href="#box3p"/></svg>Allgemeine Perspektive</li>
          <li class="l2"><i></i><svg><use href="#box3"/></svg>Allgemeine Axonometrie</li>
          <li class="l2"><i></i><svg><use href="#cam"/></svg>00 Neue Animationsroute</li>
          <li class="l1"><i><svg class="c"><use href="#chev-d"/></svg></i><svg><use href="#tbl"/></svg>Auswertungen</li>
          <li class="l2"><i><svg class="c"><use href="#chev-r"/></svg></i><svg><use href="#hatch"/></svg>Elemente</li>
          <li class="l2"><i><svg class="c"><use href="#chev-d"/></svg></i><svg><use href="#bricks"/></svg>Komponenten</li>
          <li class="l3 cur"><i></i><svg><use href="#tbl"/></svg>0 Innenputz-Auswertung</li>
          <li class="l3"><i></i><svg><use href="#tbl"/></svg>10-01 Rohbau - Bauteile</li>
          <li class="l3"><i></i><svg><use href="#tbl"/></svg>10-02 Ausbau - Fußbodenaufbau</li>
          <li class="l3"><i></i><svg><use href="#tbl"/></svg>10-03 Schicht/Komponenten - Dach</li>
          <li class="l2"><i></i><svg><use href="#brush"/></svg>Oberflächen</li>
          <li class="l1"><i><svg class="c"><use href="#chev-r"/></svg></i><svg><use href="#proj"/></svg>Projektinhalte</li>
          <li class="l1"><i><svg class="c"><use href="#chev-r"/></svg></i><svg><use href="#list"/></svg>Listen</li>
          <li class="l1"><i><svg class="c"><use href="#chev-r"/></svg></i><svg><use href="#info"/></svg>Info</li>
          <li class="l1"><i><svg class="c"><use href="#chev-r"/></svg></i><svg><use href="#calc"/></svg>Flächenberechnung</li>
          <li class="l0"><i><svg class="c"><use href="#chev-r"/></svg></i><svg><use href="#info"/></svg>Hilfe</li>
        </ul>
        <div class="scroll"><div class="thumb"></div></div>
      </div>
      <div class="acts"><button class="a1"><svg><use href="#plus"/></svg></button><button class="a2"><svg><use href="#lst"/></svg></button><button class="a3"><svg><use href="#del"/></svg></button></div>
      <div class="desc">
        <button class="group"><i class="t-d"></i>Beschreibungen</button>
        <div class="drow"><svg class="w30"><use href="#tbl"/></svg><input type="text" value="0" class="d1" aria-label="Nummer"><input type="text" value="Innenputz-Auswertung" class="d2" aria-label="Name"></div>
        <button class="btn wide">Einstellungen...</button>
      </div>
      <section class="trace">
        <i class="grip"></i>
        <div class="prow"><button class="btn dis b56" disabled><svg><use href="#layers"/></svg></button><button class="btn dis pgrow" disabled><svg><use href="#zone"/></svg>0. EG<svg class="c"><use href="#chev-r"/></svg></button></div>
        <div class="irow"><svg><use href="#swap"/></svg><span></span><svg><use href="#mv"/></svg><svg><use href="#rot"/></svg><svg><use href="#back"/></svg><svg><use href="#refresh"/></svg></div>
        <hr>
        <label for="g1">Transparentpause:</label>
        <div class="prow"><button class="btn dis b56" disabled><b></b><svg class="c"><use href="#chev-r"/></svg></button><input type="range" id="g1" value="100" disabled><button class="btn dis b26" disabled><svg class="c"><use href="#chev-r"/></svg></button></div>
        <label for="g2">Aktiv:</label>
        <div class="prow"><button class="btn dis b56" disabled><svg class="w26"><use href="#rgb"/></svg><svg class="c"><use href="#chev-r"/></svg></button><input type="range" id="g2" value="100" disabled><span class="b26"></span></div>
        <hr class="m14">
        <div class="irow lastr"><svg><use href="#hand"/></svg><svg><use href="#over"/></svg><svg><use href="#split"/></svg><svg><use href="#hide"/></svg></div>
      </section>
    </aside>
  </main>

  <footer class="status"><span class="msg">Klicken Sie mit dem Cursor auf ein Element oder ziehen Sie einen Auswahlbereich auf. Drücken Sie für Morphbearbeitung Strg/Ctrl+Umsch, um zwischen Element-/Unterelement-Auswahl zu wechseln.</span><svg><use href="#wins"/></svg><i></i><span class="gid"><b>GRAPHISOFT</b> ID</span></footer>
</div>
</body>
</html>
```
FILE: styles.css
```css
* { box-sizing: border-box; }
body { margin: 0; padding: 76px 112px 148px; background: #fff; font: 22px/26px Inter, "Liberation Sans", sans-serif; color: #262626; overflow-x: hidden; }
button, input, select { font: inherit; color: inherit; margin: 0; padding: 0; border: 0; background: none; border-radius: 0; }
button { display: flex; align-items: center; justify-content: center; }
svg { width: 40px; height: 40px; fill: none; stroke: currentColor; stroke-width: 2.5; stroke-linejoin: round; flex: none; display: block; --accent: #3d7bf7; }
i, b { flex: none; }
.defs { position: absolute; width: 0; height: 0; }
svg.c { width: 16px; height: 16px; }
.w20 { width: 20px; } .w28 { width: 28px; height: 28px; } .w30 { width: 30px; } .w44 { width: 44px; } .w52 { width: 52px; }
.w26 { width: 28px; height: 32px; }
.ac { stroke: var(--accent); }
.acf { fill: var(--accent); stroke: var(--accent); }
.or { stroke: #f0c09c; }
.fi { fill: currentColor; stroke-width: 1; }
.lt { opacity: .5; }
.mut { stroke: #8a9194; }
.mutf { fill: #8f9597; stroke: none; }
.grf { fill: #8f9597; }
.wh { stroke: #fff; }
.whf { fill: var(--paper, #fff); }
.pf { fill: #f4f4f3; }
.pg { fill: var(--pg, #ebebeb); }
.red { fill: #ee5033; stroke: none; }

.window { min-height: calc(100vh - 224px); display: flex; flex-direction: column; background: #ebebeb; border-radius: 20px; box-shadow: 0 0 2px 1px rgba(0,0,0,.35), 0 36px 72px rgba(0,0,0,.46), 0 0 40px rgba(0,0,0,.12); overflow: clip; }
.titlebar { height: 57px; background: #f1f1ef; border-bottom: 2px solid #c9c9c9; display: grid; grid-template-columns: 1fr auto 1fr; align-items: center; }
.lights { display: flex; gap: 16px; padding-left: 16px; }
.lights span { width: 24px; height: 24px; border-radius: 50%; border: 1px solid rgba(0,0,0,.15); }
.l-red { background: #ed6a5f; } .l-yel { background: #f5bf4f; } .l-grn { background: #62c655; }
h1 { margin: 0; font-size: 26px; font-weight: 700; color: #464646; display: flex; gap: 12px; align-items: center; }
.docicon { width: 24px; height: 30px; stroke-width: 1; }

.toolbar { background: #e5e5e5; border-bottom: 2px solid #e3e3e3; }
.tools-row { width: 3092px; height: 70px; background: #ebebeb; display: flex; align-items: center; padding-bottom: 2px; }
.bar { width: 20px; height: 28px; border-left: 2px solid #aaa; margin-left: 7px; margin-right: -7px; }
.bar.end { width: 24px; margin-left: 12px; margin-right: -12px; }
.sep { width: 22px; height: 44px; background: linear-gradient(90deg, transparent 10px, #cfcfcf 10px, #cfcfcf 12px, transparent 12px); }
.tb { width: 60px; height: 58px; flex: none; color: #969a9c; }
.tb svg { --accent: #a3bdf3; }
.tb.dk { color: #263238; } .tb.dk svg { --accent: #3d7bf7; }
.tb.mono svg { --accent: #969a9c; }
.ch { width: 30px; height: 58px; flex: none; color: #111; } .ch svg { width: 16px; height: 16px; }
.tb.on { width: 56px; margin: 0 2px; background: #cdcdcf; border-radius: 12px; } .tb.on svg { --accent: #85a8ef; }
.ch.on { width: 26px; margin: 0 2px; background: #bcbbc1; border-radius: 8px; }

.infobox { height: 123px; border-bottom: 3px solid #e5e5e5; }
.infobox p { margin: 0; padding: 6px 0 0 18px; font-size: 18px; line-height: 26px; }
.info-row { display: flex; align-items: flex-end; gap: 4px; height: 74px; }
.info-row .bar { height: 46px; align-self: center; width: 16px; margin-right: -7px; }
.btn { background: #fff; border-radius: 10px; box-shadow: 0 1px 3px rgba(0,0,0,.3); }
.pressed { background: #bcbbc1; border-radius: 12px; box-shadow: 0 1px 3px rgba(0,0,0,.15); }
.ib { width: 80px; height: 38px; color: #263238; gap: 10px; padding-left: 2px; } .ib svg { width: 36px; height: 34px; } .ib svg.c { width: 16px; }
.ib.big { width: 96px; height: 57px; gap: 20px; padding-left: 8px; } .ib.big svg { height: 40px; }
.btn.dis { background: #f5f5f5; color: #b9b9b9; box-shadow: 0 1px 3px rgba(0,0,0,.2); }

.body { flex: 1; display: flex; }
.toolbox { width: 314px; border-right: 4px solid #e5e5e5; display: flex; flex-direction: column; flex: none; }
.grip { display: block; width: 118px; height: 4px; background: #a9a9a9; margin: 7px auto 3px; }
.tool { height: 56px; justify-content: flex-start; color: #757575; background: #ededeb; }
.tool svg { width: 48px; margin: 0 22px 0 22px; color: #8b9193; }
.tool.sel { background: #bcbbc1; color: #000; height: 54px; margin: 0 1px 0 2px; border-radius: 10px; } .tool.sel svg { color: #263238; margin-left: 20px; }
.group { width: 100%; height: 44px; background: #d4d4d4; border-radius: 6px; justify-content: flex-start; color: #262626; flex: none; }
.toolbox .group { height: 40px; margin: 4px 0 1px; }
.toolbox .group + .group { margin-top: 1px; }
.group .t-d { border: 9px solid transparent; border-top: 16px solid #8f9597; border-bottom: 0; margin: 0 16px 4px 11px; }
.group .t-r { border: 9px solid transparent; border-left: 14px solid #8f9597; border-right: 0; margin: 0 18px 2px 12px; }
.dimmed { color: #a3a3a3; } .dimmed .t-r { opacity: .45; }

.center { flex: 1; min-width: 0; display: flex; flex-direction: column; border-right: 3px solid #e5e5e5; }
.tabs { display: flex; height: 44px; background: #e5e5e5; color: #464646; }
.t-grid { width: 66px; border-right: 2px solid #aaa; color: #263238; padding-left: 2px; }
.tab { flex: 1; display: flex; align-items: center; justify-content: center; gap: 6px; padding-right: 4px; color: inherit; text-decoration: none; border-right: 2px solid #aaa; }
.tab svg, .t-more { color: #263238; }
.tab:nth-of-type(2) { border: 0; }
.tab.active { background: #fff; border: 0; }
.t-more { width: 99px; background: #f8f8f8; gap: 10px; padding-left: 10px; } .w { width: 48px; }
.work { flex: 1; display: flex; min-height: 0; }

.settings { width: 502px; padding: 0 6px 0 4px; flex: none; color: #262626; }
.settings svg { color: #263238; }
.row { display: flex; align-items: center; height: 52px; }
.grow { flex: 1; min-width: 0; }
.r48 { height: 48px; } .r54 { height: 54px; } .r56 { height: 56px; } .r60 { height: 60px; } .r62 { height: 62px; gap: 14px; }
.stil { height: 56px; gap: 20px; padding-right: 2px; }
.pb { width: 66px; height: 48px; } .stil .pb { width: 76px; }
.r48, .r54 { padding-left: 9px; }
.w28 + input { margin-left: 29px; }
input[type=checkbox], input[type=radio] { appearance: none; width: 28px; height: 28px; border-radius: 7px; background: #fff; box-shadow: inset 0 1px 2px rgba(0,0,0,.25), 0 0 1px 1px rgba(0,0,0,.08); margin-right: 13px; flex: none; }
input[type=radio] { border-radius: 50%; }
input[type=checkbox]:checked { background: #3b7df7 url("data:image/svg+xml,%3Csvg xmlns='http://www.w3.org/2000/svg' viewBox='0 0 28 28'%3E%3Cpath d='M7 15l5 6 9-14' fill='none' stroke='white' stroke-width='4' stroke-linecap='round' stroke-linejoin='round'/%3E%3C/svg%3E"); }
input[type=radio]:checked { background: radial-gradient(#fff 6px, #3b7df7 7px); }
input + label { color: #000; }
.setb { width: 180px; height: 40px; }
hr { margin: 0; border: 0; height: 3px; background: #d2d2d2; }
.m14 { margin-top: 14px; } .m10 { margin-top: 10px; } .mt4 { margin-top: 4px; } .mt8 { margin-top: 8px; } .mb8 { margin-bottom: 8px; }
.select { position: relative; height: 40px; margin: 0 2px; background: #fff; border-radius: 9px; box-shadow: 0 1px 3px rgba(0,0,0,.3); }
.select select { appearance: none; width: 100%; height: 100%; padding-left: 17px; color: #262626; }
.select.font { margin-left: 0; } .select.font select { padding-left: 48px; }
.cap { position: absolute; right: 4px; top: 4px; width: 32px; height: 32px; border-radius: 7px; background: linear-gradient(#4f95fa, #2f72f5); display: grid; place-items: center; pointer-events: none; }
.cap svg { width: 18px; height: 32px; color: #fff; stroke-width: 3; }
input[type=text] { height: 41px; background: #fff; border: 1px solid #dcdcdc; border-bottom: 2px solid #b5b5b5; padding-left: 6px; min-width: 0; }
.w136 { width: 136px; } .w76 { width: 76px; } .ml22 { margin-left: 22px; } .ml18 { margin-left: 18px; }
.zh { height: 75px; padding-top: 9px; } .zh svg { margin-right: 24px; }
.unit { width: 76px; padding-left: 7px; } .unit2 { padding-left: 13px; }
.starb { width: 52px; height: 42px; margin-left: 2px; } .starb svg { width: 32px; height: 36px; } .starb svg.c { width: 14px; }
.penb { width: 66px; height: 40px; margin: 0 2px 0 8px; gap: 14px; }
.penb i { width: 3px; height: 22px; background: #000; } .penb b { width: 27px; height: 22px; background: #000; margin-right: -6px; }
.format { display: flex; justify-content: space-between; }
.btns { display: grid; grid-template-columns: 66px 72px 70px 70px; grid-auto-rows: 60px; margin-left: 2px; padding-top: 30px; align-items: center; }
.btns button { height: 48px; } .btns svg { height: 36px; } .btns .mu svg { color: #8b9193; }
.nums { width: 205px; } .nums .w44 { margin-right: 8px; }
.step { width: 26px; height: 41px; margin: 0 7px 0 12px; background: #fff; border-radius: 9px; box-shadow: 0 1px 3px rgba(0,0,0,.3); display: grid; grid-template-rows: 1fr 1fr; justify-items: center; }
.step svg { width: 18px; height: 18px; stroke-width: 3; }
.step button + button { border-top: 1px solid #ccc; width: 26px; }
.bg { padding: 0 16px 0 10px; } .bg input { margin-left: 14px; }
.well { width: 160px; height: 48px; background: #fff; border: 3px solid #a9a9a9; }
.fa { height: 44px; padding-left: 6px; } .ra { padding-left: 6px; }
.fmt { padding-right: 2px; } .fmt > svg { margin-right: 30px; } .fmt > svg + svg { margin-right: 20px; } .fmt svg { height: 36px; }
.ln { height: 64px; align-items: flex-end; margin-bottom: 12px; }
.line { width: 280px; height: 58px; margin-left: 2px; padding: 0 6px 0 16px; justify-content: space-between; }
.line span { width: 240px; height: 42px; border-bottom: 3px solid #000; text-align: left; color: #000; line-height: 22px; font-size: 20px; }
.fz { height: 82px; }
.ur { height: 72px; gap: 4px; padding-right: 2px; line-height: 26px; align-items: flex-start; padding-top: 10px; }
.ubt { width: 66px; height: 63px; margin-top: -6px; } .ubt svg { width: 58px; height: 60px; color: #8b9193; --accent: #9db8f3; }
.splitter { width: 12px; background: #dadada; position: relative; }
.splitter::after { content: ""; position: absolute; left: 0; top: 864px; border: 10px solid transparent; border-right: 12px solid #8f9597; border-left: 0; }

.editor { flex: 1; min-width: 0; display: flex; flex-direction: column; position: relative; }
.etools { height: 74px; display: flex; align-items: center; padding: 2px 3px 0 12px; color: #333; }
.etools .btn { height: 47px; } .etools svg, .cornerb svg { color: #263238; }
.gearb { width: 56px; margin-right: 24px; } .gearb svg { width: 34px; height: 36px; } .gearb svg.c { width: 14px; }
.e76 { width: 76px; margin-right: 16px; } .e76 svg { width: 38px; height: 38px; }
.state { margin-left: auto; margin-right: 34px; }
.etools .schema { width: 332px; height: 40px; margin-bottom: 10px; color: #262626; }
.sheet { flex: 1; display: grid; padding-left: 10px; grid-template-columns: 48px 1fr 8px 26px 5px; grid-template-rows: 48px 1fr 37px; }
.cornerb { width: 44px; height: 46px; margin-left: 2px; }
.ruler-h { width: 100%; height: 46px; background: #fff; }
.ruler-v { width: 48px; height: 100%; background: #fff; grid-row: 2; grid-column: 1; min-height: 1540px; }
.ruler-h text, .ruler-v text { font-size: 20px; fill: #000; stroke: none; text-anchor: middle; font-family: Inter, sans-serif; }
.canvas { grid-row: 2; grid-column: 2; background: #fff; border: 3px solid #7b7f7b; padding: 1px 15px; }
.colhead { width: 251px; height: 17px; background: #dff1fc; border-bottom: 5px solid #000; }
.vtrack { grid-row: 2; grid-column: 4; background: #fafafa; }
.zoom { grid-row: 3; grid-column: 1 / 4; display: flex; padding-left: 2px; gap: 6px; }
.zoom .btn { height: 35px; color: #263238; } .z1 { width: 95px; } .z2 { width: 24px; } .z3 { width: 48px; } .z3 svg { width: 40px; height: 28px; }
.htrack { flex: 1; height: 26px; background: #f7f7f7; align-self: center; margin-right: 8px; }

table { border-collapse: collapse; table-layout: fixed; width: 1771px; margin-top: -3px; font-family: "Liberation Sans", Arial, sans-serif; font-size: 42px; line-height: 46px; color: #000; }
.w250 { width: 250px; } .w266 { width: 266px; } .w252 { width: 252px; }
th, td { border: 3px solid #000; padding: 0; height: 50px; font-weight: 400; text-align: center; white-space: nowrap; }
.hd th { height: 300px; font-size: 41px; line-height: 49px; }
td { text-align: left; padding-left: 5px; }
td.ed { padding: 0; }
sup { font-size: 26px; line-height: 0; vertical-align: 12px; }
input[type=text].cell { display: block; width: 100%; height: 46px; border: 0; padding: 5px 0 0 5px; font-size: 39px; color: #262626; background: linear-gradient(#c0c0c0, #c0c0c0) right 8px bottom 4px / 15px 32px no-repeat #fff; }
.cell.focus { outline: 5px solid #000; outline-offset: -1px; }
.marks { position: absolute; left: 0; top: 0; width: 100%; height: 600px; overflow: visible; pointer-events: none; stroke-linejoin: miter; }
.pk { stroke: #e94ff2; stroke-width: 9; } .arr { stroke-width: 10; } .pkf { fill: #e94ff2; stroke: #e94ff2; stroke-width: 3; } .rd { stroke: #e9412a; stroke-width: 9; }

.nav { width: 718px; flex: none; color: #262626; }
.nav .grip { width: 140px; }
.nav svg { color: #263238; }
.nav-tools { height: 68px; display: flex; align-items: center; padding: 0 6px 2px; gap: 20px; }
.nb { width: 56px; height: 57px; } .nsep { width: 2px; height: 40px; background: #ccc; margin: 0 0 0 -6px; }
.menu { width: 66px; height: 44px; margin-left: auto; }
.search { display: flex; align-items: center; height: 41px; margin: 8px 6px 7px; padding-left: 5px; background: #fff; border: 1px solid #d5d5d5; border-bottom: 2px solid #b5b5b5; }
.search input { flex: 1; padding-left: 8px; outline: 0; } .search input::placeholder { color: #b9b9b9; opacity: 1; }
.tree { height: 954px; overflow: hidden; background: #fff; display: flex; }
.tree ul { flex: 1; margin: -6px 0 0; padding: 0; list-style: none; color: #000; }
.tree li { height: 48px; display: flex; align-items: center; }
.tree li > svg { margin-right: 6px; width: 40px; height: 40px; }
.tree li i { width: 26px; height: 24px; display: grid; place-items: center; margin-right: 5px; margin-left: 5px; }
.tree li i svg { width: 20px; height: 20px; color: #808080; }
.tree .l1 { padding-left: 28px; } .tree .l2 { padding-left: 56px; } .tree .l3 { padding-left: 84px; }
.tree .wt { --pg: #fff; }
.tree .cur { background: #dcdcdc; font-weight: 700; }
.scroll { width: 30px; background: #fafafa; border-left: 2px solid #e8e8e8; }
.thumb { width: 16px; height: 666px; margin: 281px 0 0 6px; border-radius: 8px; background: #c1c1c1; }
.acts { height: 68px; display: flex; align-items: center; gap: 20px; padding-left: 15px; }
.acts .a1 svg { color: #9db8f3; } .acts .a2 svg { color: #3d7bf7; } .acts .a3 svg { color: #ee5033; }
.desc { padding: 0 4px 6px; border-bottom: 2px solid #e3e3e3; }
.drow { display: flex; align-items: center; height: 52px; padding-right: 2px; }
.drow .w30 { margin: 0 10px 0 2px; height: 32px; } .drow input[type=text] { height: 36px; } .d1 { width: 160px; margin-right: 10px; } .d2 { flex: 1; }
.wide { width: 100%; height: 40px; }
.trace { padding: 0 6px; color: #757575; }
.trace svg { color: #8b9193; --accent: #9db8f3; --paper: #f5f5f5; }
.trace .grip { margin: 8px auto 7px; }
.trace hr { margin-left: -6px; margin-right: -6px; }
.prow { display: flex; gap: 4px; height: 57px; }
.b56 { width: 56px; gap: 2px; } .b56 b { width: 25px; height: 24px; background: #f19b8b; } .b26 { width: 26px; flex: none; }
.pgrow { flex: 1; justify-content: flex-start; padding: 0 6px 0 4px; gap: 8px; } .pgrow .c { margin-left: auto; }
.irow { display: flex; height: 78px; padding: 0 8px 8px; gap: 20px; align-items: center; } .irow span { width: 40px; }
.lastr { height: 68px; padding: 10px 68px 0; }
.trace label { display: block; padding: 12px 0 11px; margin-left: -2px; }
input[type=range] { appearance: none; flex: 1; height: 46px; margin: 0 2px 0 6px; background: linear-gradient(#e1e1e1, #e1e1e1) 0 50% / 100% 8px no-repeat, repeating-linear-gradient(90deg, #d7d7d7 0 4px, transparent 4px 60px) 0 50% / 100% 16px no-repeat; }
input[type=range]::-webkit-slider-thumb { appearance: none; width: 16px; height: 32px; border-radius: 8px; background: #f8f8f8; box-shadow: 0 1px 3px rgba(0,0,0,.3); }

.status { height: 50px; border-top: 2px solid #e3e3e3; display: flex; align-items: center; padding: 0 24px 7px 14px; }
.msg { flex: 1; white-space: nowrap; }
.status svg { color: #263238; height: 34px; }
.status i { width: 2px; height: 30px; background: #8f9597; margin: 0 20px 0 16px; }
.gid { font: 300 26px/30px Lato, sans-serif; color: #263238; } .gid b { font-weight: 500; }
```
